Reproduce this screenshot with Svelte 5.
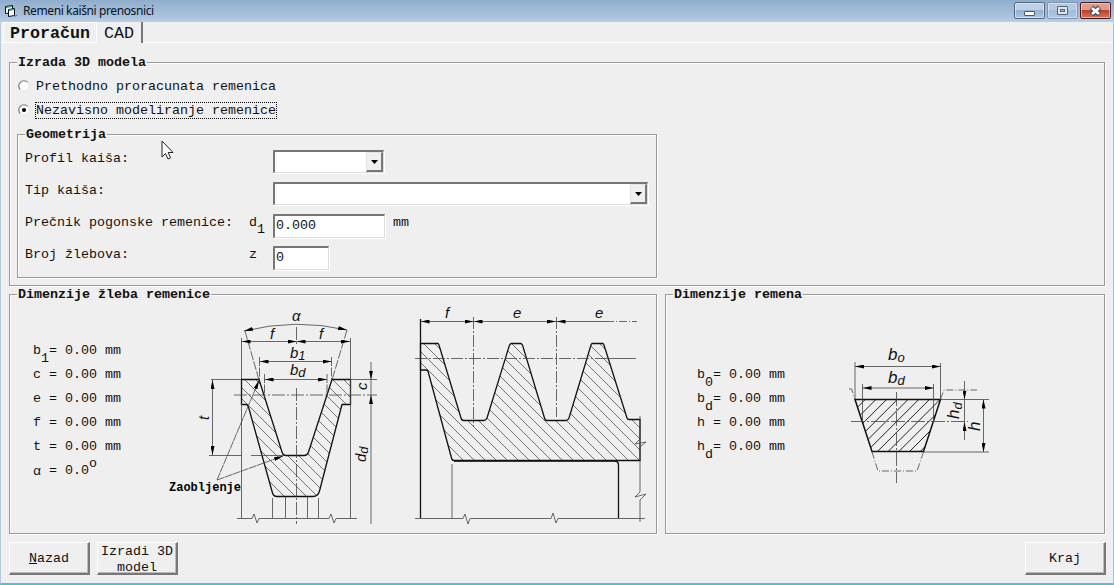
<script>
  let selected = $state('independent');
  const modes = [
    { id: 'previous', label: 'Prethodno proracunata remenica' },
    { id: 'independent', label: 'Nezavisno modeliranje remenice' }
  ];
  const groove = [
    { name: 'b', sub: '1', value: '0.00 mm' },
    { name: 'c', value: '0.00 mm' },
    { name: 'e', value: '0.00 mm' },
    { name: 'f', value: '0.00 mm' },
    { name: 't', value: '0.00 mm' },
    { name: 'α', value: '0.0', degree: true }
  ];
  const belt = [
    { name: 'b', sub: '0', value: '0.00 mm' },
    { name: 'b', sub: 'd', value: '0.00 mm' },
    { name: 'h', value: '0.00 mm' },
    { name: 'h', sub: 'd', value: '0.00 mm' }
  ];
  const rim = 'M241.500 379.500H259L282 452Q283 455.500 286 455.500H304Q307.500 455.500 308.500 452L332 379.500H350.500V404.500H342L319.500 491Q318 496.500 313 496.500H277Q273.500 496.500 272.500 493L248.500 407Q248 404.500 246 404.500H241.500Z';
  const profile = 'M420.500 343.500H438L439 345L461 418Q461.500 420.500 464 420.500H484Q486 420.500 487 418L509.500 345L511 343.500H521L522.500 345L544.500 418Q545 420.500 547 420.500H566Q568 420.500 569 418L591 345L592 343.500H603L604 345L627 418Q627.500 419.500 629 419.500H640V460.500H454Q452 460.500 451.500 458L428.500 373Q428 370 426 370H420.500Z';
  const beltShape = 'M855 399.500H940.500L923.500 451.500H872Z';

  // Parallel section lines; slope is +1 for falling and -1 for rising hatching.
  function hatch(x0, x1, y0, y1, step, slope) {
    const h = y1 - y0;
    let d = '';
    for (let x = x0 - h; x < x1 + h; x += step) {
      d += slope > 0 ? `M${x} ${y0}L${x + h} ${y1}` : `M${x} ${y1}L${x + h} ${y0}`;
    }
    return d;
  }
</script>

{#snippet dims(rows)}
  <div class="dims">
    {#each rows as r}
      <div class="dim"><span class="sym" class:greek={r.degree}>{r.name}</span><span class="sub">{r.sub ?? ''}</span><span class="val">= {r.value}</span>{#if r.degree}<span class="deg">o</span>{/if}</div>
    {/each}
  </div>
{/snippet}

{#snippet combo(cls)}
  <div class="field combo {cls}">
    <button class="drop" aria-label="▼"><svg width="7" height="4" viewBox="0 0 7 4"><path d="M0 0H7L3.5 4Z" /></svg></button>
  </div>
{/snippet}

<div class="window">
  <header class="titlebar">
    <svg class="appicon" width="14" height="14" viewBox="0 0 14 14">
      <path d="M1.500 2.500L8.500 1.500V8.500L1.500 9.500Z" fill="#fff" stroke="#111" />
      <path d="M2 3.500L8 2.500" stroke="#18a5a5" stroke-width="1.200" />
      <path d="M4.500 5.500L10.500 4.500V11.500L4.500 12.500Z" fill="#fff" stroke="#111" />
      <path d="M5 6.500L10 5.500" stroke="#18a5a5" stroke-width="1.200" />
      <path d="M11 12.500L13 11" fill="none" stroke="#666" />
    </svg>
    <span class="title">Remeni kaišni prenosnici</span>
    <div class="controls">
      <div class="ctl"><svg width="29" height="15" viewBox="0 0 29 15"><rect x="9.500" y="8.500" width="10" height="4" rx="0.500" fill="#fff" stroke="#4d5866" /></svg></div>
      <div class="ctl max"><svg width="29" height="15" viewBox="0 0 29 15"><rect x="9.500" y="3.500" width="10" height="8" rx="0.500" fill="#e0e6ec" stroke="#566270" /><rect x="12.500" y="6.500" width="4" height="2" fill="#a9bfd8" stroke="#566270" /></svg></div>
      <div class="ctl close"><svg width="29" height="15" viewBox="0 0 29 15"><path d="M10.500 4.500L18.500 11.500M18.500 4.500L10.500 11.500" stroke="#494b59" stroke-width="5" /><path d="M11 5L18 11M18 5L11 11" stroke="#fff" stroke-width="2.800" /></svg></div>
    </div>
  </header>

  <nav class="tabs">
    <div class="tab first">Proračun</div>
    <div class="tab active">CAD</div>
  </nav>

  <main>
    <section class="group model">
      <h2>Izrada 3D modela</h2>
      <div class="modes">
        {#each modes as m}
          <button class="mode" onclick={() => (selected = m.id)}>
            <svg class="radio" width="12" height="12" viewBox="0 0 12 12">
              <circle cx="6" cy="6" r="5" fill="#fff" />
              <path d="M2.300 9.700A5.200 5.200 0 0 1 9.700 2.300" fill="none" stroke="#777" stroke-width="1.200" />
              <path d="M9.700 2.300A5.200 5.200 0 0 1 2.300 9.700" fill="none" stroke="#e2e2e2" />
              {#if selected === m.id}<circle cx="6" cy="6" r="2.100" fill="#000" />{/if}
            </svg>
            <span class:focus={selected === m.id}>{m.label}</span>
          </button>
        {/each}
      </div>
      <section class="group geometry">
        <h2>Geometrija</h2>
        <div class="form">
          <span class="lbl">Profil kaiša:</span><span></span>{@render combo('short')}<span></span>
          <span class="lbl">Tip kaiša:</span><span></span>{@render combo('wide')}
          <span class="lbl">Prečnik pogonske remenice:</span><span class="lbl">d<span class="sub">1</span></span>
          <div class="field num">0.000</div><span class="lbl unit">mm</span>
          <span class="lbl">Broj žlebova:</span><span class="lbl">z</span>
          <div class="field small">0</div><span></span>
        </div>
      </section>
    </section>

    <div class="lower">
      <section class="group groove">
        <h2>Dimenzije žleba remenice</h2>
        <div class="inner">
          {@render dims(groove)}
          <svg class="drawing" width="496" height="228" viewBox="160 300 496 228">
            <defs>
              <marker id="arrow" viewBox="0 0 9 4" refX="9" refY="2" markerWidth="9" markerHeight="4" markerUnits="userSpaceOnUse" orient="auto-start-reverse"><path d="M0 0L9 2L0 4Z" /></marker>
              <clipPath id="rimClip"><path d={rim} /></clipPath>
              <clipPath id="profileClip"><path d={profile} /></clipPath>
            </defs>
            <g class="hatching">
              <path clip-path="url(#rimClip)" d={hatch(241, 351, 379, 497, 11, 1)} />
              <path clip-path="url(#profileClip)" d={hatch(420, 641, 343, 461, 11, 1)} />
            </g>
            <g class="solid">
              <path d={rim} />
              <path d={profile} />
              <path d="M420.500 319V518M454 461H614Q618.500 461 618.500 465V518" />
            </g>
            <g class="thin">
              <path d="M241.500 338V379M350.500 338V518M241.500 404V518M241.500 379.500H211M241.500 455.500H209M251 455.500H284M350 379.500H377M272.500 498V518M285.500 497V518M307.500 497V518M318.500 498V518" />
              <path d="M237 518.500H252L254 514L257 523L259 518.500H329L331 514L334 523L336 518.500H357" />
              <path d="M245 331L259 380M347 330L332 380M259.500 357V379M331.500 357V379M264.500 374V397M327 374V397" stroke-dasharray="9 1.500" />
              <path d="M296.500 327V345M296.500 388V524M234 395H377" stroke-dasharray="13 2 2 2" />
              <path marker-start="url(#arrow)" marker-end="url(#arrow)" d="M244 331Q296 318 347 330" />
              <path marker-start="url(#arrow)" marker-end="url(#arrow)" d="M241.500 341.500H296.500" />
              <path marker-start="url(#arrow)" marker-end="url(#arrow)" d="M296.500 341.500H350" />
              <path marker-start="url(#arrow)" marker-end="url(#arrow)" d="M259.500 361.500H331.500" />
              <path marker-start="url(#arrow)" marker-end="url(#arrow)" d="M264.500 379.500H327" />
              <path marker-start="url(#arrow)" marker-end="url(#arrow)" d="M212.500 380V455" />
              <path marker-end="url(#arrow)" d="M371 362V379.500" />
              <path marker-end="url(#arrow)" d="M371 524V395" />
              <path d="M371 380V395" />
              <g stroke-dasharray="8 0.500"><path marker-end="url(#arrow)" d="M217 480L259 380.500" /><path marker-end="url(#arrow)" d="M217 480L283 456" /></g>

              <path marker-start="url(#arrow)" marker-end="url(#arrow)" d="M420.500 321.500H473.500" />
              <path marker-start="url(#arrow)" marker-end="url(#arrow)" d="M473.500 321.500H556" />
              <path marker-start="url(#arrow)" d="M556.500 321.500H606" />
              <path d="M606 321.500H637" stroke-dasharray="8 2 1 2" />
              <path d="M473.500 317V427M556.500 317V417M415 358.500H595" stroke-dasharray="12 2 2 2" />
              <path d="M595 358.500H636M452 464V518M640 416V439L635 444L646 442L640 447V492L635 497L646 494L640 500V522" />
              <path d="M415 518.500H463L465 514L468 524L470 518.500H551L553 513L556 523L558 518.500H645" />
            </g>
            <g class="symbols">
              <text x="292" y="321">α</text><text x="270" y="339">f</text><text x="319" y="339">f</text>
              <text x="290" y="358">b<tspan class="index" dy="2">1</tspan></text>
              <text x="290" y="375">b<tspan class="index" dy="2">d</tspan></text>
              <text transform="translate(209 420) rotate(-90)">t</text>
              <text transform="translate(367 390) rotate(-90)">c</text>
              <text transform="translate(366 462) rotate(-90)">d<tspan class="index" dy="2">d</tspan></text>
              <text x="445" y="318">f</text><text x="513" y="318">e</text><text x="595" y="318">e</text>
            </g>
            <text class="callout" x="169" y="491">Zaobljenje</text>
          </svg>
        </div>
      </section>

      <section class="group belt">
        <h2>Dimenzije remena</h2>
        <div class="inner">
          {@render dims(belt)}
          <svg class="drawing" width="160" height="150" viewBox="840 340 160 150">
            <defs><clipPath id="beltClip"><path d={beltShape} /></clipPath></defs>
            <g class="hatching dark"><path clip-path="url(#beltClip)" d={hatch(855, 941, 399, 452, 10.7, -1)} /></g>
            <path d={beltShape} fill="none" stroke="#111" stroke-width="1.500" />
            <g class="thin">
              <path d="M855 362V399M940.500 363V399M940 399.500H989M924 452H989M862.500 384V422M933.500 384V422" />
              <path d="M896.500 392V483M851 421.500H968" stroke-dasharray="14 2 2 2" />
              <path d="M849 389H851.500L855 399M940.500 399L944 390H977M872 452L878 471H917L923.500 452" stroke-dasharray="7 2 1 2" />
              <path marker-start="url(#arrow)" marker-end="url(#arrow)" d="M855 366.500H940.500" />
              <path marker-start="url(#arrow)" marker-end="url(#arrow)" d="M862.500 388H933.500" />
              <path marker-start="url(#arrow)" marker-end="url(#arrow)" d="M983.500 399.500V452" />
              <path marker-end="url(#arrow)" d="M964.500 381V399.500" />
              <path marker-end="url(#arrow)" d="M964.500 440V422" />
              <path d="M964.500 400V422" />
            </g>
            <g class="symbols large">
              <text x="888" y="360">b<tspan class="index" dy="2">o</tspan></text>
              <text x="888" y="383">b<tspan class="index" dy="2">d</tspan></text>
              <text transform="translate(959 419) rotate(-90)">h<tspan class="index" dy="3">d</tspan></text>
              <text transform="translate(980 431) rotate(-90)">h</text>
            </g>
          </svg>
        </div>
      </section>
    </div>

    <footer>
      <button class="push"><span><u>N</u>azad</span></button>
      <button class="push">Izradi 3D model</button>
      <button class="push end">Kraj</button>
    </footer>
  </main>

  <svg class="cursor" width="13" height="21" viewBox="0 0 13 21"><path d="M1 1V17L4.500 13.500L7 19L9.500 18L7.200 12.500H12Z" fill="#fff" stroke="#222" /></svg>
</div>

<style>
  :global(body) { overflow: hidden; }
  * { box-sizing: border-box; }
  .window {
    position: relative; width: 1114px; height: 585px; display: flex; flex-direction: column;
    background: #efefef; color: #111; font: 13.333px/16px "Liberation Mono", "Courier New", monospace;
    border: solid; border-width: 0 1px 2px; border-color: #b5cbe4 #8fc6e8 #5bbbd3 #b5cbe4;
  }
  .titlebar {
    height: 22px; flex: none; display: flex; align-items: center; padding: 0 3px 0 3px;
    background: linear-gradient(#8fadcb 0, #9bb7d5 30%, #a9c2dd 75%, #b9cfe6); margin: 0 -1px;
  }
  .appicon { margin: -1px 0 0 1px; }
  .title { margin-left: 5px; font: 12px/20px "Noto Sans", "Open Sans", sans-serif; letter-spacing: -0.390px; color: #0c1118; }
  .controls { display: flex; gap: 2px; margin-left: auto; height: 17px; margin-top: -1px; }
  .ctl { width: 31px; height: 17px; border: 1px solid #53687f; border-radius: 2px; background: linear-gradient(#bdd0e5 0 48%, #94b1d1 50%, #adc8e3); box-shadow: inset 0 0 0 1px #ffffff70; }
  .ctl svg { display: block; }
  .ctl.max { border-color: #8096b0; background: linear-gradient(#b4cae2 0 48%, #a2bddb 50%, #adc8e3); }
  .ctl.close { border-color: #431b20; background: linear-gradient(#dc9b8c 0 45%, #bd4028 50%, #d4765a); }

  .tabs { height: 21px; flex: none; display: flex; font-size: 16.667px; line-height: 20px; padding-left: 2px; border-bottom: 1px solid #fff; }
  .tab { height: 21px; }
  .first { width: 93px; font-weight: bold; padding: 1px 0 0 6px; border: solid #fff; border-width: 1px 0 1px 1px; }
  .active { width: 47px; padding: 2px 0 0 7px; background: #efefef; border-left: 1px solid #fff; border-right: 2px solid #777; }

  main { flex: 1; display: flex; flex-direction: column; padding: 19px 7px 0 8px; }
  .group { border: 1px solid #999; box-shadow: 1px 1px 0 #fff, inset 1px 1px 0 #fff; }
  h2 { font: inherit; font-weight: bold; width: max-content; height: 16px; margin: -8px 0 0 7px; padding: 0 1px; background: #efefef; white-space: pre; }
  .model { height: 224px; width: 1096px; }
  .modes { padding: 3px 0 0 8px; }
  .mode { display: flex; align-items: center; height: 24px; padding: 0; border: 0; background: none; font: inherit; color: inherit; white-space: pre; }
  .radio { margin-right: 5px; }
  .mode span { padding: 0 1px; height: 17px; border: 1px solid transparent; border-width: 1px 0; line-height: 16px; }
  .mode .focus { border: 1px dotted #000; padding: 0; }
  .geometry { width: 640px; height: 144px; margin: 12px 0 0 7px; }
  .form { display: grid; grid-template-columns: 224px 24px 112px 1fr; grid-auto-rows: 32px; padding: 7px 0 0 7px; }
  .lbl { padding-top: 1px; white-space: pre; }
  .unit { padding-left: 8px; }
  .field { height: 24px; background: #fff; border: solid; border-width: 2px 1px 1px 2px; border-color: #777 #ddd #ddd #777; box-shadow: 1px 1px 0 #fff; padding: 2px 0 0 1px; }
  .form .sub { position: relative; top: 7px; }
  .combo { display: flex; justify-content: flex-end; padding: 0; height: 23px; }
  .short { width: 111px; }
  .wide { grid-column: 3 / 5; width: 375px; }
  .num { width: 112px; }
  .small { width: 56px; }
  .drop { width: 17px; height: 20px; padding: 0; display: grid; place-items: center; background: #efefef; border: solid; border-width: 1px 2px 2px 1px; border-color: #e5e5e5 #777 #777 #e5e5e5; }

  .lower { display: flex; gap: 8px; margin-top: 8px; }
  .lower .group { height: 240px; }
  .groove { width: 648px; }
  .belt { width: 440px; }
  .inner { display: flex; }
  .dims { flex: none; white-space: pre; }
  .groove .dims { padding: 40px 0 0 23px; width: 150px; }
  .belt .dims { padding: 64px 0 0 31px; width: 174px; }
  .dim { display: flex; height: 24px; align-items: flex-start; }
  .dim .sub { width: 8px; padding-top: 8px; }
  .sym { width: 8px; }
  .greek { padding-top: 1px; }
  .deg { margin-top: -7px; }
  .drawing { flex: none; display: block; margin-top: -3px; }
  .belt .drawing { margin-top: 37px; }
  .hatching { fill: none; stroke: #555; stroke-width: 0.800; }
  .dark { stroke: #222; stroke-width: 1; }
  .solid { fill: none; stroke: #111; stroke-width: 1.300; }
  .thin { fill: none; stroke: #444; stroke-width: 0.800; }
  .symbols { font: italic 15px "Liberation Sans", Arial, sans-serif; fill: #111; }
  .symbols.large { font-size: 17px; }
  .index { font-size: 13px; }
  .callout { font: bold 12px "Liberation Mono", monospace; fill: #000; }

  footer { display: flex; gap: 7px; margin-top: 8px; }
  .push { width: 81px; height: 33px; padding: 1px 0 0; font: inherit; color: #111; background: #efefef; border: solid; border-width: 1px 2px 2px 1px; border-color: #fff #777 #777 #fff; box-shadow: inset -1px -1px 0 #bbb; }
  .end { margin-left: auto; }
  .cursor { position: absolute; left: 160px; top: 140px; }
</style>
